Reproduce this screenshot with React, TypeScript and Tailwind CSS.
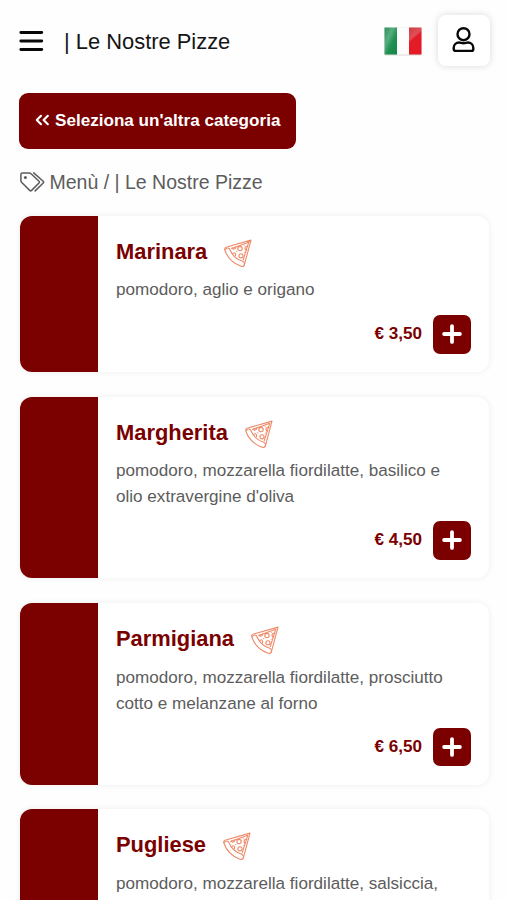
type Pizza = {
  name: string;
  lines: string[];
  price: string;
  height: string;
  textOffset: string;
};

const pizzas: Pizza[] = [
  {
    name: "Marinara",
    lines: ["pomodoro, aglio e origano"],
    price: "€ 3,50",
    height: "h-[156px]",
    textOffset: "h-[61px]",
  },
  {
    name: "Margherita",
    lines: ["pomodoro, mozzarella fiordilatte, basilico e", "olio extravergine d'oliva"],
    price: "€ 4,50",
    height: "h-[181.5px]",
    textOffset: "h-[61px]",
  },
  {
    name: "Parmigiana",
    lines: ["pomodoro, mozzarella fiordilatte, prosciutto", "cotto e melanzane al forno"],
    price: "€ 6,50",
    height: "h-[182px]",
    textOffset: "h-[62px]",
  },
  {
    name: "Pugliese",
    lines: ["pomodoro, mozzarella fiordilatte, salsiccia,"],
    price: "",
    height: "h-[182px]",
    textOffset: "h-[62px]",
  },
];

function ItalianFlag() {
  return (
    <svg width="38" height="29" viewBox="0 0 38 29">
      <defs>
        <linearGradient id="green" x1="0" y1="0" x2="1" y2="1">
          <stop offset="0" stopColor="#2b8f5b" />
          <stop offset="0.35" stopColor="#58ad80" />
          <stop offset="0.6" stopColor="#219052" />
          <stop offset="1" stopColor="#128646" />
        </linearGradient>
        <linearGradient id="red" x1="0" y1="0" x2="0.4" y2="1">
          <stop offset="0" stopColor="#cf3b42" />
          <stop offset="0.4" stopColor="#e04f57" />
          <stop offset="0.5" stopColor="#e31c27" />
          <stop offset="1" stopColor="#e51a25" />
        </linearGradient>
      </defs>
      <rect x="0.5" y="0.8" width="37" height="27.6" rx="1" fill="#d6d8d6" />
      <path d="M0.5 0.5H13V27.5H1Q0.5 27.5 0.5 27Z" fill="url(#green)" />
      <path d="M13 1H25V27.6H13Z" fill="#fdfdfd" />
      <path d="M25 0.5H37.5V27Q37.5 27.5 37 27.5H25Z" fill="url(#red)" />
    </svg>
  );
}

function UserIcon() {
  return (
    <svg
      width="23"
      height="26"
      viewBox="0 0 23 26"
      fill="none"
      stroke="#080808"
      strokeWidth="2.4"
      strokeLinejoin="round"
    >
      <circle cx="11.5" cy="7.2" r="6" />
      <path d="M7.2 15.5C8.7 15.5 9.5 16.2 11.5 16.2C13.5 16.2 14.3 15.5 15.8 15.5C19 15.5 21.3 17.8 21.3 20.8V21.9Q21.3 23.9 19.3 23.9H3.7Q1.7 23.9 1.7 21.9V20.8C1.7 17.8 4 15.5 7.2 15.5Z" />
    </svg>
  );
}

function TagsIcon() {
  return (
    <svg
      width="25"
      height="20"
      viewBox="0 0 25 20"
      fill="none"
      stroke="currentColor"
      strokeWidth="1.5"
      strokeLinecap="round"
      strokeLinejoin="round"
    >
      <path d="M2.4 0.9H9.3Q10.2 0.9 10.8 1.5L19 9.2Q19.9 10.1 19 11L11.6 18.4Q10.6 19.3 9.7 18.4L1.5 10.2Q0.9 9.6 0.9 8.7V2.4Q0.9 0.9 2.4 0.9Z" />
      <path d="M13.7 0.9L23.2 9.2Q24.1 10.1 23.2 11L15.2 18.9" />
      <circle cx="5.4" cy="5.5" r="1.5" fill="currentColor" stroke="none" />
    </svg>
  );
}

function PizzaIcon() {
  return (
    <svg
      width="28"
      height="28"
      viewBox="0 0 28 28"
      fill="none"
      stroke="#ee8a68"
      strokeWidth="1.1"
      strokeLinecap="round"
      strokeLinejoin="round"
    >
      <path d="M3.6 7.8L27 1.1L20.3 26.2C19.7 27.7 18 27.6 16.5 27C8.6 24.1 3.4 18.4 0.9 11.3C0.2 9.2 1.6 8 3.6 7.8Z" />
      <path d="M1.5 10.6C2.8 8.2 5.2 8.5 6 10.8C8.2 16.1 12.6 20.4 18.2 22C20.7 22.8 20.8 25 20 26.4" />
      <path d="M7.6 9.4L24.8 3.2L19.2 20.8" />
      <circle cx="16" cy="9.6" r="2.2" />
      <circle cx="17" cy="16.8" r="2.1" />
      <path d="M8.3 8.9C8.8 10.8 11.7 10.3 11.7 8M23.8 7.4C20.9 6.6 20 10.2 22.6 11.2M8.9 14.4C10.4 13 12.3 14.2 11.4 16.8" />
      <path d="M20.3 6.2V6.3M20.3 13.2V13.3M12.8 12.6V12.7" />
    </svg>
  );
}

function PizzaCard({ pizza }: { pizza: Pizza }) {
  return (
    <article
      className={`flex shrink-0 overflow-hidden rounded-[12px] bg-white shadow-[0_0_6px_rgba(0,0,0,0.07)] ${pizza.height}`}
    >
      <div className="w-[78.5px] shrink-0 bg-[#7b0000]" />
      <div className="flex flex-1 flex-col pr-[18px] pb-[18.5px] pl-[18px]">
        <div className={`flex items-start gap-[17px] pt-[23px] ${pizza.textOffset}`}>
          <h2 className="text-[21.9px] leading-[26px] font-bold text-[#7b0000]">{pizza.name}</h2>
          <PizzaIcon />
        </div>
        <div className="text-[17.1px] leading-[26px] whitespace-nowrap text-[#5c5c5c]">
          {pizza.lines.map((line) => (
            <p key={line}>{line}</p>
          ))}
        </div>
        {pizza.price && (
          <div className="mt-auto flex items-center justify-end gap-[10.5px]">
            <span className="text-[17.1px] leading-[26px] font-bold text-[#7b0000]">
              {pizza.price}
            </span>
            <button className="flex size-[38.5px] items-center justify-center rounded-[7px] bg-[#7b0000]">
              <svg
                width="20"
                height="20"
                viewBox="0 0 20 20"
                stroke="white"
                strokeWidth="3.8"
                strokeLinecap="round"
              >
                <path d="M10 2.1V17.9M2.1 10H17.9" />
              </svg>
            </button>
          </div>
        )}
      </div>
    </article>
  );
}

export default function App() {
  return (
    <div className="h-[900px] w-full overflow-hidden bg-[#fefefe] font-['Liberation_Sans',Arial,sans-serif]">
      <header className="flex h-[82px] items-start pr-[17px] pl-[19px]">
        <button className="mt-[30px]">
          <svg
            width="25"
            height="22"
            viewBox="0 0 25 22"
            stroke="#080808"
            strokeWidth="2.8"
            strokeLinecap="round"
          >
            <path d="M1.8 2.5H22.8M1.8 11H22.8M1.8 19.5H22.8" />
          </svg>
        </button>
        <h1 className="mt-[29px] ml-[20px] text-[21.9px] leading-[26px] text-[#151515]">
          | Le Nostre Pizze
        </h1>
        <div className="mt-[27px] ml-auto">
          <ItalianFlag />
        </div>
        <button className="mt-[15px] ml-[16px] flex h-[51px] w-[52px] items-center justify-center rounded-[8px] bg-white pr-[1px] pb-[1px] shadow-[0_0_7px_rgba(0,0,0,0.15)]">
          <UserIcon />
        </button>
      </header>
      <main className="pt-[11px] pr-[18px] pl-[19.5px]">
        <button className="-ml-[0.5px] flex h-[55.5px] w-[277px] items-center rounded-[9px] bg-[#7b0000] pl-[16px] text-white">
          <svg
            width="15"
            height="12"
            viewBox="0 0 15 12"
            fill="none"
            stroke="currentColor"
            strokeWidth="2.2"
            strokeLinecap="round"
            strokeLinejoin="round"
            className="-mt-[2px]"
          >
            <path d="M6 1.8L1.8 6L6 10.2M12.8 1.8L8.6 6L12.8 10.2" />
          </svg>
          <span className="ml-[5px] text-[17.1px] leading-[26px] font-bold whitespace-nowrap">
            Seleziona un'altra categoria
          </span>
        </button>
        <nav className="mt-[20.5px] flex h-[26px] items-center gap-[5px] text-[19.5px] text-[#5c5c5c]">
          <TagsIcon />
          <span className="mt-[2px]">Menù / | Le Nostre Pizze</span>
        </nav>
        <div className="mt-[21px] flex flex-col gap-[24.5px]">
          {pizzas.map((pizza) => (
            <PizzaCard key={pizza.name} pizza={pizza} />
          ))}
        </div>
      </main>
    </div>
  );
}
